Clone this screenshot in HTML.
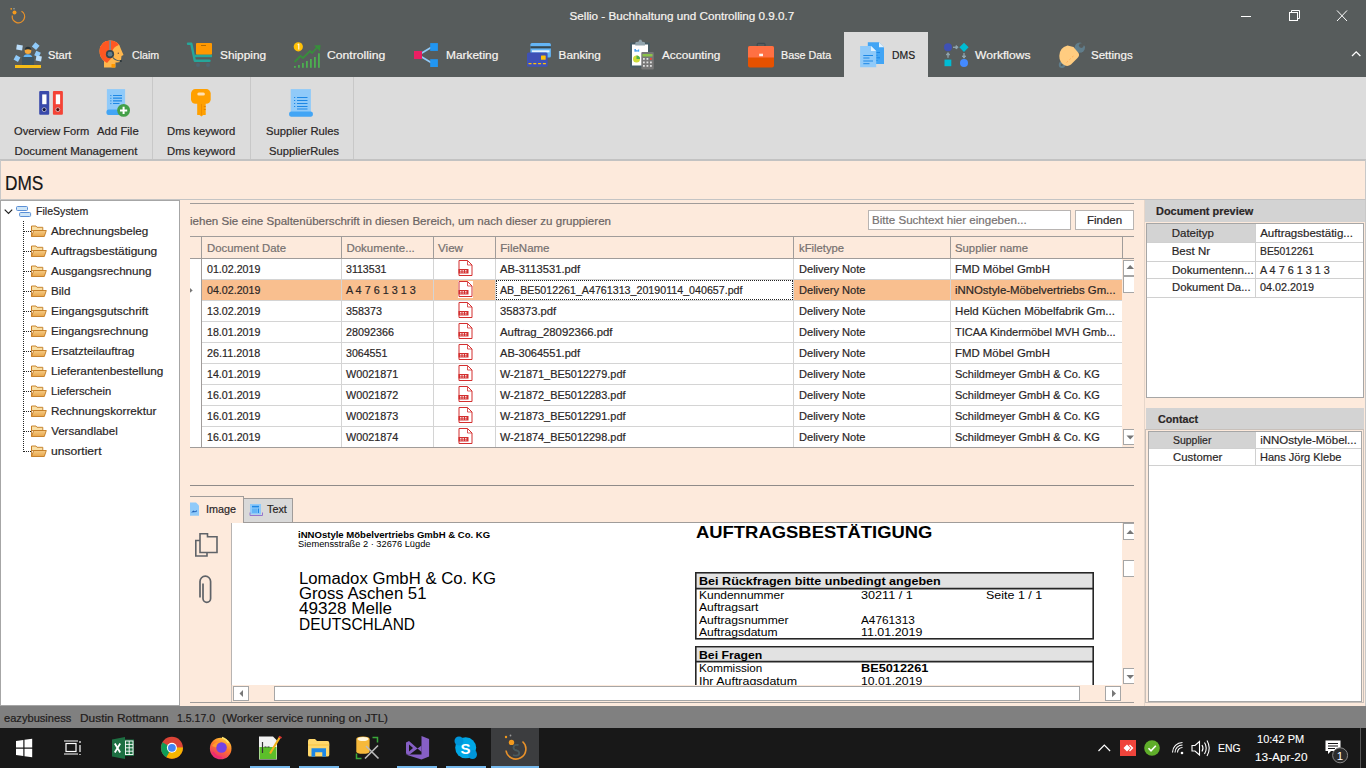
<!DOCTYPE html>
<html><head><meta charset="utf-8">
<style>
*{margin:0;padding:0;box-sizing:border-box}
html,body{width:1366px;height:768px;overflow:hidden;background:#fdeadc;font-family:"Liberation Sans",sans-serif;color:#1e1b1b}
.a{position:absolute}
.t{position:absolute;white-space:pre;transform-origin:0 0;-webkit-text-stroke:0.2px currentColor}
svg.ov{position:absolute;left:0;top:0}
</style></head><body>
<div class="a" style="left:0;top:0;width:1366px;height:77px;background:#575c5c"></div>
<div class="a" style="left:844px;top:32px;width:84px;height:45px;background:#dcdcdc"></div>
<div class="a" style="left:0;top:77px;width:1366px;height:83px;background:#dcdcdc"></div>
<div class="a" style="left:0;top:159px;width:1366px;height:2px;background:#c2c2c2"></div>
<div class="a" style="left:152px;top:77px;width:1px;height:82px;background:#c8c8c8"></div>
<div class="a" style="left:250px;top:77px;width:1px;height:82px;background:#c8c8c8"></div>
<div class="a" style="left:353px;top:77px;width:1px;height:82px;background:#c8c8c8"></div>
<!-- content frame right edge -->
<div class="a" style="left:1365px;top:160px;width:1px;height:546px;background:#c8c8c8"></div>
<!-- line at 200 -->
<div class="a" style="left:0;top:199px;width:1366px;height:1px;background:#c4c4c4"></div>
<!-- tree panel -->
<div class="a" style="left:0;top:200px;width:180px;height:506px;background:#fff;border:1px solid #a6a6a6;border-top-color:#a6a6a6"></div>
<!-- group panel -->
<div class="a" style="left:190px;top:203px;width:944px;height:1px;background:#a09c9a"></div>
<!-- search -->
<div class="a" style="left:868px;top:210px;width:203px;height:20px;background:#fff;border:1px solid #b8b4b2"></div>
<div class="a" style="left:1075px;top:210px;width:59px;height:20px;background:#fff;border:1px solid #b8b4b2"></div>
<!-- grid -->
<div class="a" style="left:190px;top:236px;width:944px;height:1px;background:#a09c9a"></div>
<div class="a" style="left:190px;top:258px;width:944px;height:1px;background:#a09c9a"></div>
<div class="a" style="left:190px;top:259px;width:932px;height:188px;background:#fff"></div>
<div class="a" style="left:202px;top:280px;width:920px;height:20px;background:#f9bf8f"></div>
<div class="a" style="left:496px;top:280px;width:297px;height:20px;background:#fff;border:1px dotted #222"></div>
<div class="a" style="left:458px;top:281px;width:15px;height:17px;background:#fff"></div>
<div class="a" style="left:190px;top:447px;width:944px;height:1px;background:#a09c9a"></div>
<div class="a" style="left:202px;top:279px;width:920px;height:1px;background:#d4d4d4"></div>
<div class="a" style="left:202px;top:300px;width:920px;height:1px;background:#d4d4d4"></div>
<div class="a" style="left:202px;top:321px;width:920px;height:1px;background:#d4d4d4"></div>
<div class="a" style="left:202px;top:342px;width:920px;height:1px;background:#d4d4d4"></div>
<div class="a" style="left:202px;top:363px;width:920px;height:1px;background:#d4d4d4"></div>
<div class="a" style="left:202px;top:384px;width:920px;height:1px;background:#d4d4d4"></div>
<div class="a" style="left:202px;top:405px;width:920px;height:1px;background:#d4d4d4"></div>
<div class="a" style="left:202px;top:426px;width:920px;height:1px;background:#d4d4d4"></div>
<div class="a" style="left:341px;top:237px;width:1px;height:21px;background:#a09c9a"></div>
<div class="a" style="left:341px;top:259px;width:1px;height:188px;background:#d4d4d4"></div>
<div class="a" style="left:433px;top:237px;width:1px;height:21px;background:#a09c9a"></div>
<div class="a" style="left:433px;top:259px;width:1px;height:188px;background:#d4d4d4"></div>
<div class="a" style="left:495px;top:237px;width:1px;height:21px;background:#a09c9a"></div>
<div class="a" style="left:495px;top:259px;width:1px;height:188px;background:#d4d4d4"></div>
<div class="a" style="left:793px;top:237px;width:1px;height:21px;background:#a09c9a"></div>
<div class="a" style="left:793px;top:259px;width:1px;height:188px;background:#d4d4d4"></div>
<div class="a" style="left:950px;top:237px;width:1px;height:21px;background:#a09c9a"></div>
<div class="a" style="left:950px;top:259px;width:1px;height:188px;background:#d4d4d4"></div>
<div class="a" style="left:201px;top:237px;width:1px;height:210px;background:#a09c9a"></div>
<div class="a" style="left:1122px;top:237px;width:1px;height:21px;background:#a09c9a"></div>
<!-- grid scrollbar -->
<div class="a" style="left:1123px;top:260px;width:11px;height:16px;background:#fff;border:1px solid #a6a6a6;border-right:none"></div>
<div class="a" style="left:1123px;top:276px;width:11px;height:17px;background:#fff;border:1px solid #a6a6a6;border-right:none"></div>
<div class="a" style="left:1123px;top:429px;width:11px;height:16px;background:#fff;border:1px solid #a6a6a6;border-right:none"></div>
<!-- splitter -->
<div class="a" style="left:190px;top:485px;width:944px;height:1px;background:#8f8b89"></div>
<!-- preview tabs -->
<div class="a" style="left:190px;top:496px;width:54px;height:27px;border-top:1px solid #a09c9a;border-right:1px solid #a09c9a;background:#fdeadc"></div>
<div class="a" style="left:244px;top:498px;width:49px;height:24px;background:#d9d9d9;border:1px solid #a09c9a;border-left:none;border-bottom:none"></div>
<div class="a" style="left:244px;top:522px;width:890px;height:1px;background:#a09c9a"></div>
<!-- preview area -->
<div class="a" style="left:231px;top:523px;width:891px;height:162px;background:#fff;border-left:1px solid #b8b4b2"></div>
<div class="a" style="left:231px;top:685px;width:1px;height:17px;background:#c4c0be"></div>
<!-- doc boxes -->
<svg class="a" style="left:0;top:0" width="1366" height="768">
<rect x="696" y="573.5" width="397" height="15" fill="#e2e2e2"/>
<rect x="696" y="647.5" width="397" height="14" fill="#e2e2e2"/>
<g fill="none" stroke="#262626" stroke-width="1.6">
<rect x="695.8" y="572.8" width="397.4" height="66"/>
<path d="M695.8,588.6 H1093.2"/>
<path d="M695.8,685 V646.8 H1093.2 V685 M695.8,661.6 H1093.2"/>
</g></svg>
<!-- preview scrollbars -->
<div class="a" style="left:1123px;top:523px;width:11px;height:17px;background:#fff;border:1px solid #a6a6a6;border-right:none"></div>
<div class="a" style="left:1123px;top:560px;width:11px;height:17px;background:#fff;border:1px solid #a6a6a6;border-right:none"></div>
<div class="a" style="left:1123px;top:668px;width:11px;height:16px;background:#fff;border:1px solid #a6a6a6;border-right:none"></div>
<div class="a" style="left:233px;top:686px;width:16px;height:15px;background:#fff;border:1px solid #a6a6a6"></div>
<div class="a" style="left:274px;top:686px;width:806px;height:15px;background:#fff;border:1px solid #a6a6a6"></div>
<div class="a" style="left:1105px;top:686px;width:16px;height:15px;background:#fff;border:1px solid #a6a6a6"></div>
<div class="a" style="left:190px;top:702px;width:944px;height:1px;background:#a09c9a"></div>
<!-- right panel -->
<div class="a" style="left:1144px;top:200px;width:1px;height:506px;background:#e6d6ca"></div>
<div class="a" style="left:1145px;top:200px;width:220px;height:22px;background:#d3d3d3"></div>
<div class="a" style="left:1146px;top:223px;width:218px;height:175px;background:#fff;border:1px solid #a6a6a6"></div>
<div class="a" style="left:1147px;top:224px;width:108px;height:19px;background:#d3d3d3"></div>
<div class="a" style="left:1147px;top:242px;width:216px;height:1px;background:#d0d0d0"></div>
<div class="a" style="left:1147px;top:261px;width:216px;height:1px;background:#d0d0d0"></div>
<div class="a" style="left:1147px;top:278px;width:216px;height:1px;background:#d0d0d0"></div>
<div class="a" style="left:1147px;top:297px;width:216px;height:1px;background:#d0d0d0"></div>
<div class="a" style="left:1255px;top:224px;width:1px;height:73px;background:#d0d0d0"></div>
<div class="a" style="left:1146px;top:408px;width:218px;height:21px;background:#d3d3d3"></div>
<div class="a" style="left:1145px;top:429px;width:219px;height:274px;border:1px solid #c8c0ba;background:#fdeadc"></div>
<div class="a" style="left:1148px;top:431px;width:214px;height:271px;background:#fff;border:1px solid #a6a6a6"></div>
<div class="a" style="left:1149px;top:432px;width:106px;height:17px;background:#d3d3d3"></div>
<div class="a" style="left:1149px;top:448px;width:212px;height:1px;background:#d0d0d0"></div>
<div class="a" style="left:1149px;top:465px;width:212px;height:1px;background:#d0d0d0"></div>
<div class="a" style="left:1255px;top:432px;width:1px;height:33px;background:#d0d0d0"></div>
<!-- status bar -->
<div class="a" style="left:0;top:706px;width:1366px;height:22px;background:#808080"></div>
<!-- taskbar -->
<div class="a" style="left:0;top:728px;width:1366px;height:40px;background:#181818"></div>
<div class="a" style="left:491px;top:728px;width:48px;height:40px;background:#3c3d3f"></div>
<div class="a" style="left:250px;top:766px;width:40px;height:2px;background:#76b9ed"></div>
<div class="a" style="left:299px;top:766px;width:40px;height:2px;background:#76b9ed"></div>
<div class="a" style="left:397px;top:766px;width:40px;height:2px;background:#76b9ed"></div>
<div class="a" style="left:446px;top:766px;width:40px;height:2px;background:#76b9ed"></div>
<div class="a" style="left:491px;top:766px;width:48px;height:2px;background:#76b9ed"></div>
<div class="a" style="left:1360px;top:728px;width:1px;height:40px;background:#555"></div>
<div class="a" style="left:0;top:160px;width:1px;height:40px;background:#c8c8c8"></div>

<svg class="ov" width="1366" height="768" viewBox="0 0 1366 768">
<!-- app logo -->
<g>
<path d="M21.5,11.2 A6.2,6.2 0 1 1 12.3,15.5" fill="none" stroke="#e8912a" stroke-width="1.3"/>
<circle cx="14.5" cy="12.5" r="2" fill="#f39a1e"/>
<circle cx="11.2" cy="8.8" r="0.9" fill="#f39a1e"/>
<circle cx="14" cy="8.8" r="0.8" fill="#9aa"/>
</g>
<!-- window controls -->
<g stroke="#fff" stroke-width="1" fill="none">
<path d="M1241,16.5 H1251"/>
<rect x="1289.5" y="12.5" width="8" height="8"/>
<path d="M1291.5,12.5 V10.5 H1299.5 V18.5 H1297.5"/>
<path d="M1337,10.5 L1347,21 M1347,10.5 L1337,21"/>
<path d="M1352,56 L1356.2,51.8 L1360.4,56" stroke-width="1.3"/>
</g>
<!-- Start icon -->
<g>
<rect x="15" y="65" width="26" height="3" fill="#f6bd16"/>
<rect x="22" y="57" width="12" height="8" fill="#3e5461"/>
<path d="M23.5,57 Q24,54.5 27.5,54.3 Q31.5,54.5 32.3,57 Z" fill="#64b5f6"/>
<circle cx="28" cy="50.8" r="3.3" fill="#f7a93b"/>
<path d="M24.7,50 Q25,46.8 28,46.8 Q31,46.8 31.3,50 Q28,48.5 24.7,50Z" fill="#263238"/>
<rect x="16.5" y="45" width="6" height="5" fill="#bbdefb" transform="rotate(8 19.5 47.5)"/>
<rect x="33" y="43.5" width="5.5" height="5.5" fill="#90caf9" transform="rotate(40 35.8 46.2)"/>
<rect x="14.5" y="56" width="5" height="5" fill="#90caf9" transform="rotate(30 17 58.5)"/>
<rect x="35" y="51.5" width="5" height="5" fill="#90caf9" transform="rotate(25 37.5 54)"/>
<rect x="36" y="56" width="5.5" height="5" fill="#bbdefb" transform="rotate(10 38.7 58.5)"/>
</g>
<!-- Claim -->
<g>
<path d="M104,67.5 V61 Q99.5,57 99.5,51 Q100,41 110,40.5 Q118.5,40.5 120.5,48 L123.5,55 L121.5,56 L121,60 Q120.5,62.5 117,62.5 L115.5,62.5 V67.5 Z" fill="#ffb74d"/>
<path d="M104,61 Q99.5,57 99.5,51 Q100,41 110,40.5 Q116.5,40.5 118.8,45 Q113,47 112,52 L111.5,58 L107,63 Z" fill="#ff5722"/>
<rect x="109.3" y="40.5" width="1.6" height="10" fill="#78909c"/>
<circle cx="110" cy="54.2" r="4.1" fill="#37474f"/>
<circle cx="110" cy="54.2" r="2.4" fill="#607d8b"/>
<path d="M113,57.5 Q115,60.5 120.5,61" stroke="#455a64" stroke-width="1.1" fill="none"/>
<circle cx="120.8" cy="61" r="1.1" fill="#263238"/>
<circle cx="118.3" cy="53.3" r="0.7" fill="#6d4c41"/>
<rect x="111.5" y="64" width="3.5" height="3.5" fill="#ff9800"/>
</g>
<!-- Shipping -->
<g>
<path d="M188,43.8 H191.3 L194.8,60.8 H209.5" stroke="#26a69a" stroke-width="2.4" fill="none" stroke-linecap="round" stroke-linejoin="round"/>
<rect x="196" y="43" width="16" height="11.7" rx="1" fill="#ff9800"/>
<rect x="201" y="45" width="5" height="1" fill="#b26a00"/>
<rect x="195" y="54.7" width="17" height="2.5" fill="#26a69a"/>
<circle cx="198" cy="65" r="2" fill="#4f6571"/>
<circle cx="208" cy="65" r="2" fill="#4f6571"/>
</g>
<!-- Controlling -->
<g>
<g fill="#4caf50">
<rect x="294" y="66" width="1.8" height="1.8"/>
<rect x="298" y="65" width="1.8" height="2.8"/>
<rect x="302" y="63" width="1.8" height="4.8"/>
<rect x="306" y="61" width="1.8" height="6.8"/>
<rect x="310" y="59" width="1.8" height="8.8"/>
<rect x="314" y="57" width="1.8" height="10.8"/>
<rect x="318" y="53.3" width="1.8" height="14.5"/>
</g>
<path d="M294.5,62 L300.5,56 L303,58 L310,51 L312,53 L318,46.5" stroke="#388e3c" stroke-width="1.8" fill="none"/>
<path d="M314,45.5 L320.5,45 L320,51.5 Z" fill="#388e3c"/>
<circle cx="298.3" cy="46.8" r="4.6" fill="#ffc107"/>
<path d="M297.6,44.6 L298.8,44 V49.6" stroke="#fff" stroke-width="1" fill="none"/>
</g>
<!-- Marketing -->
<g>
<path d="M421,53.5 L431,47.5 M421,56.5 L431,62.5" stroke="#90caf9" stroke-width="1.8"/>
<rect x="414" y="51" width="8" height="8" fill="#e91e63"/>
<rect x="430.2" y="43.1" width="7.7" height="7.8" fill="#2196f3"/>
<rect x="430.2" y="59.2" width="7.7" height="7.8" fill="#2196f3"/>
</g>
<!-- Banking -->
<g>
<rect x="530.4" y="43" width="20.5" height="14.5" rx="1.5" fill="#64b5f6"/>
<rect x="530.4" y="46.2" width="20.5" height="2.2" fill="#37474f"/>
<rect x="532" y="50.3" width="17.5" height="2" fill="#e3f2fd"/>
<rect x="527" y="52.5" width="20.6" height="14.2" rx="1.5" fill="#3f51b5"/>
<rect x="541" y="55.4" width="4.7" height="4.3" rx="0.5" fill="#ffc107"/>
<path d="M528.5,63.7 H546" stroke="#ffc107" stroke-width="1.3" stroke-dasharray="3,1.8"/>
</g>
<!-- Accounting -->
<g>
<rect x="630" y="42.4" width="19.8" height="25" rx="1" fill="#455a64"/>
<rect x="632" y="44.5" width="16" height="21" fill="#fff"/>
<path d="M635.3,45.5 V42.8 Q635.5,41.8 638.5,41.8 L639.3,39.8 L641.3,39.8 L642.2,41.8 Q645,41.8 645,42.8 V45.5Z" fill="#90a4ae"/>
<rect x="634.5" y="49" width="1.3" height="2.7" fill="#1e88e5"/>
<rect x="636.3" y="50" width="1.3" height="1.7" fill="#1e88e5"/>
<rect x="637.9" y="49.5" width="1.3" height="2.2" fill="#42a5f5"/>
<circle cx="636.5" cy="59" r="3.5" fill="#cddc39"/>
<path d="M636.5,59 V55.5 A3.5,3.5 0 0 1 640,59 Z" fill="#4caf50"/>
<rect x="641.3" y="52.1" width="12.5" height="17.3" rx="1" fill="#777"/>
<rect x="642.5" y="54" width="10" height="2.5" fill="#8bc34a"/>
<g fill="#e0e0e0">
<rect x="643" y="58" width="1.8" height="1.8"/><rect x="646.5" y="58" width="1.8" height="1.8"/>
<rect x="643" y="61.5" width="1.8" height="1.8"/><rect x="646.5" y="61.5" width="1.8" height="1.8"/><rect x="650" y="61.5" width="1.8" height="1.8"/>
<rect x="643" y="65" width="1.8" height="1.8"/><rect x="646.5" y="65" width="1.8" height="1.8"/><rect x="650" y="65" width="1.8" height="1.8"/>
</g>
<rect x="650" y="58" width="1.8" height="1.8" fill="#f44336"/>
</g>
<!-- Base Data -->
<g>
<path d="M757.2,46.2 V44 Q757.2,43.3 758,43.3 H764.2 Q765,43.3 765,44 V46.2" stroke="#37474f" stroke-width="1" fill="none"/>
<rect x="748" y="46.1" width="26" height="21.3" rx="2" fill="#e65100"/>
<path d="M748,57.5 V48.1 Q748,46.1 750,46.1 H772 Q774,46.1 774,48.1 V57.5Z" fill="#ff7043"/>
<rect x="759.2" y="53.7" width="3.8" height="2.5" fill="#fff5ee"/>
</g>
<!-- DMS -->
<g>
<path d="M867.8,42.3 H879 L884,47.3 V64 H867.8Z" fill="#42a5f5"/>
<path d="M879,42.3 L884,47.3 H879Z" fill="#e3f2fd"/>
<path d="M860.1,45.9 H871 L876.2,51 V67.2 H860.1Z" fill="#90caf9"/>
<path d="M871,45.9 L876.2,51 H871Z" fill="#e3f2fd"/>
<g stroke="#1e88e5" stroke-width="1">
<path d="M863.3,55.5 H873 M863.3,58 H869.5 M863.3,61 H873 M863.3,63.7 H869.5"/>
<path d="M876.5,52.5 H880 M876.5,55.3 H877.5 M876.5,57.8 H880 M876.5,60.5 H877.5"/>
</g>
</g>
<!-- Workflows -->
<g>
<circle cx="948" cy="47.3" r="4" fill="#3f51b5"/>
<path d="M964,42.7 L968.6,47.3 L964,51.9 L959.4,47.3Z" fill="#00bcd4"/>
<rect x="944.5" y="59.6" width="6.8" height="6.6" fill="#00bcd4"/>
<circle cx="964" cy="63" r="4" fill="#448aff"/>
<g fill="#90a4ae" stroke="#90a4ae">
<path d="M953,47.3 H957" stroke-width="1.3"/><path d="M956,45.6 L958.2,47.3 L956,49Z"/>
<path d="M948,57.8 V54" stroke-width="1.3"/><path d="M946.3,54.8 L948,52.6 L949.7,54.8Z"/>
<path d="M964,53 V56.8" stroke-width="1.3"/><path d="M962.3,56 L964,58.2 L965.7,56Z"/>
</g>
</g>
<!-- Settings -->
<g>
<circle cx="1062" cy="64.8" r="3.2" fill="#607d8b"/><circle cx="1061.8" cy="65" r="1" fill="#575c5c"/>
<path d="M1063,63 L1076,50" stroke="#607d8b" stroke-width="3.4"/>
<circle cx="1079.8" cy="47.6" r="5.2" fill="#607d8b"/>
<circle cx="1081.3" cy="45.6" r="2.4" fill="#575c5c"/>
<path d="M1081.3,43.2 L1086,40.5 L1087,46 L1083.7,45.6Z" fill="#575c5c"/>
<path d="M1059.3,56 Q1059.3,47.5 1067.5,45.4 L1073.5,47 L1078.5,53 Q1080,55.5 1077.5,58 L1071,64.5 Q1068,66.8 1065,65.5 Q1059.3,62.5 1059.3,56Z" fill="#ffcc80"/>
<path d="M1066.5,62.5 L1068,61.2 M1069.3,59.8 L1070.8,58.5 M1072,57.2 L1073.5,56" stroke="#ffab57" stroke-width="0.9"/>
</g>
<!-- Ribbon: binders -->
<g>
<rect x="39.2" y="91" width="10" height="23.7" rx="1" fill="#3949ab"/>
<rect x="42.2" y="94.4" width="4.3" height="9.8" fill="#fff"/>
<circle cx="44.2" cy="109.6" r="2" fill="#0d1040" stroke="#c9c9d6" stroke-width="0.8"/>
<rect x="52.9" y="91" width="10" height="23.7" rx="1" fill="#f44336"/>
<rect x="55.8" y="94.4" width="4.3" height="9.8" fill="#fff"/>
<circle cx="57.8" cy="109.6" r="2" fill="#5a0c0c" stroke="#d9c9c9" stroke-width="0.8"/>
</g>
<!-- Add file -->
<g>
<rect x="106.9" y="89.1" width="18.2" height="23" fill="#90caf9"/>
<path d="M106.4,112 Q106.4,109.5 108.5,109.5 H120 V115 H108.5 Q106.4,115 106.4,112Z" fill="#42a5f5"/>
<g stroke="#1e88e5" stroke-width="1.2"><path d="M113,95.5 H122 M113,98.2 H122 M113,100.8 H122 M113,103.5 H119.5"/></g>
<g fill="#1e88e5"><rect x="110.3" y="95" width="1.1" height="1.1"/><rect x="110.3" y="97.7" width="1.1" height="1.1"/><rect x="110.3" y="100.3" width="1.1" height="1.1"/><rect x="110.3" y="103" width="1.1" height="1.1"/></g>
<circle cx="123.6" cy="110.4" r="6.4" fill="#43a047"/>
<path d="M123.6,106.8 V114 M120,110.4 H127.2" stroke="#fff" stroke-width="2"/>
</g>
<!-- key -->
<g>
<rect x="191" y="89.1" width="19.7" height="14.7" rx="4.5" fill="#ffa000"/>
<rect x="197.2" y="103" width="8.5" height="12" fill="#ffa000"/>
<path d="M197.2,113 L201.4,116.4 L205.7,113Z" fill="#ffa000"/>
<rect x="197.3" y="92.5" width="7.6" height="3" rx="1.5" fill="#ffe0b2"/>
<path d="M205.7,106.5 H203.8 M205.7,109.5 H203.8" stroke="#e08000" stroke-width="1"/>
<rect x="201" y="104" width="1" height="11" fill="#ef8f00"/>
</g>
<!-- supplier rules -->
<g>
<rect x="290.7" y="89.1" width="20.2" height="24" fill="#90caf9"/>
<path d="M289,114 Q289,111.4 291,111.4 H311 Q313,111.4 313,114 Q313,116.7 311,116.7 H291 Q289,116.7 289,114Z" fill="#42a5f5"/>
<g stroke="#1e88e5" stroke-width="1"><path d="M297,97.5 H307.5 M297,100.5 H307.5 M297,103.5 H307.5 M297,106.5 H307.5 M297,109 H307.5"/></g>
<g fill="#1e88e5"><rect x="294" y="97" width="1.2" height="1"/><rect x="294" y="100" width="1.2" height="1"/><rect x="294" y="103" width="1.2" height="1"/><rect x="294" y="106" width="1.2" height="1"/></g>
</g>
<!-- tree -->
<path d="M4.7,209.6 L8.5,213.4 L12.2,209.6" stroke="#222" stroke-width="1.2" fill="none"/>
<rect x="16.5" y="206.5" width="11" height="4" rx="1" fill="#cfe6f8" stroke="#5b8fd6" stroke-width="1"/>
<rect x="19.6" y="212.5" width="11" height="4" rx="1" fill="#cfe6f8" stroke="#5b8fd6" stroke-width="1"/>
<path d="M23.5,221 V452" stroke="#222" stroke-width="1" stroke-dasharray="1,1"/>
<defs><linearGradient id="fg" x1="0" y1="0" x2="0" y2="1"><stop offset="0" stop-color="#fde7b0"/><stop offset="1" stop-color="#e9a54a"/></linearGradient></defs>
<path d="M24,231.5 H31" stroke="#222" stroke-width="1" stroke-dasharray="1,1"/>
<g transform="translate(31.5,225.5)"><path d="M0,0.5 H4.5 L5.5,1.8 H11.3 V5 H0Z" fill="#f9dfa5" stroke="#c27a23" stroke-width="0.9"/><path d="M0,11 V1 M2.2,5 H14.8 L12.8,11 H0Z" fill="url(#fg)" stroke="#c27a23" stroke-width="0.9"/></g>
<path d="M24,251.5 H31" stroke="#222" stroke-width="1" stroke-dasharray="1,1"/>
<g transform="translate(31.5,245.5)"><path d="M0,0.5 H4.5 L5.5,1.8 H11.3 V5 H0Z" fill="#f9dfa5" stroke="#c27a23" stroke-width="0.9"/><path d="M0,11 V1 M2.2,5 H14.8 L12.8,11 H0Z" fill="url(#fg)" stroke="#c27a23" stroke-width="0.9"/></g>
<path d="M24,271.5 H31" stroke="#222" stroke-width="1" stroke-dasharray="1,1"/>
<g transform="translate(31.5,265.5)"><path d="M0,0.5 H4.5 L5.5,1.8 H11.3 V5 H0Z" fill="#f9dfa5" stroke="#c27a23" stroke-width="0.9"/><path d="M0,11 V1 M2.2,5 H14.8 L12.8,11 H0Z" fill="url(#fg)" stroke="#c27a23" stroke-width="0.9"/></g>
<path d="M24,291.5 H31" stroke="#222" stroke-width="1" stroke-dasharray="1,1"/>
<g transform="translate(31.5,285.5)"><path d="M0,0.5 H4.5 L5.5,1.8 H11.3 V5 H0Z" fill="#f9dfa5" stroke="#c27a23" stroke-width="0.9"/><path d="M0,11 V1 M2.2,5 H14.8 L12.8,11 H0Z" fill="url(#fg)" stroke="#c27a23" stroke-width="0.9"/></g>
<path d="M24,311.5 H31" stroke="#222" stroke-width="1" stroke-dasharray="1,1"/>
<g transform="translate(31.5,305.5)"><path d="M0,0.5 H4.5 L5.5,1.8 H11.3 V5 H0Z" fill="#f9dfa5" stroke="#c27a23" stroke-width="0.9"/><path d="M0,11 V1 M2.2,5 H14.8 L12.8,11 H0Z" fill="url(#fg)" stroke="#c27a23" stroke-width="0.9"/></g>
<path d="M24,331.5 H31" stroke="#222" stroke-width="1" stroke-dasharray="1,1"/>
<g transform="translate(31.5,325.5)"><path d="M0,0.5 H4.5 L5.5,1.8 H11.3 V5 H0Z" fill="#f9dfa5" stroke="#c27a23" stroke-width="0.9"/><path d="M0,11 V1 M2.2,5 H14.8 L12.8,11 H0Z" fill="url(#fg)" stroke="#c27a23" stroke-width="0.9"/></g>
<path d="M24,351.5 H31" stroke="#222" stroke-width="1" stroke-dasharray="1,1"/>
<g transform="translate(31.5,345.5)"><path d="M0,0.5 H4.5 L5.5,1.8 H11.3 V5 H0Z" fill="#f9dfa5" stroke="#c27a23" stroke-width="0.9"/><path d="M0,11 V1 M2.2,5 H14.8 L12.8,11 H0Z" fill="url(#fg)" stroke="#c27a23" stroke-width="0.9"/></g>
<path d="M24,371.5 H31" stroke="#222" stroke-width="1" stroke-dasharray="1,1"/>
<g transform="translate(31.5,365.5)"><path d="M0,0.5 H4.5 L5.5,1.8 H11.3 V5 H0Z" fill="#f9dfa5" stroke="#c27a23" stroke-width="0.9"/><path d="M0,11 V1 M2.2,5 H14.8 L12.8,11 H0Z" fill="url(#fg)" stroke="#c27a23" stroke-width="0.9"/></g>
<path d="M24,391.5 H31" stroke="#222" stroke-width="1" stroke-dasharray="1,1"/>
<g transform="translate(31.5,385.5)"><path d="M0,0.5 H4.5 L5.5,1.8 H11.3 V5 H0Z" fill="#f9dfa5" stroke="#c27a23" stroke-width="0.9"/><path d="M0,11 V1 M2.2,5 H14.8 L12.8,11 H0Z" fill="url(#fg)" stroke="#c27a23" stroke-width="0.9"/></g>
<path d="M24,411.5 H31" stroke="#222" stroke-width="1" stroke-dasharray="1,1"/>
<g transform="translate(31.5,405.5)"><path d="M0,0.5 H4.5 L5.5,1.8 H11.3 V5 H0Z" fill="#f9dfa5" stroke="#c27a23" stroke-width="0.9"/><path d="M0,11 V1 M2.2,5 H14.8 L12.8,11 H0Z" fill="url(#fg)" stroke="#c27a23" stroke-width="0.9"/></g>
<path d="M24,431.5 H31" stroke="#222" stroke-width="1" stroke-dasharray="1,1"/>
<g transform="translate(31.5,425.5)"><path d="M0,0.5 H4.5 L5.5,1.8 H11.3 V5 H0Z" fill="#f9dfa5" stroke="#c27a23" stroke-width="0.9"/><path d="M0,11 V1 M2.2,5 H14.8 L12.8,11 H0Z" fill="url(#fg)" stroke="#c27a23" stroke-width="0.9"/></g>
<path d="M24,451.5 H31" stroke="#222" stroke-width="1" stroke-dasharray="1,1"/>
<g transform="translate(31.5,445.5)"><path d="M0,0.5 H4.5 L5.5,1.8 H11.3 V5 H0Z" fill="#f9dfa5" stroke="#c27a23" stroke-width="0.9"/><path d="M0,11 V1 M2.2,5 H14.8 L12.8,11 H0Z" fill="url(#fg)" stroke="#c27a23" stroke-width="0.9"/></g>

<!-- grid pdf icons -->
<defs><g id="pdf"><path d="M0.5,0.5 H9 L13.5,5 V15.5 H0.5Z" fill="#fff" stroke="#d32f2f" stroke-width="1"/><path d="M9,0.5 V5 H13.5" fill="none" stroke="#d32f2f" stroke-width="0.8"/><rect x="0" y="9" width="10" height="4.5" fill="#d32f2f"/><path d="M1.5,10.5 H3 M4,10.5 H5.5 M6.5,10.5 H8 M1.5,12 H3 M4,12 H5.5 M6.5,12 H8" stroke="#fff" stroke-width="0.8"/></g></defs>
<use href="#pdf" x="458.5" y="260"/>
<use href="#pdf" x="458.5" y="281"/>
<use href="#pdf" x="458.5" y="302"/>
<use href="#pdf" x="458.5" y="323"/>
<use href="#pdf" x="458.5" y="344"/>
<use href="#pdf" x="458.5" y="365"/>
<use href="#pdf" x="458.5" y="386"/>
<use href="#pdf" x="458.5" y="407"/>
<use href="#pdf" x="458.5" y="428"/>
<path d="M190,288 L192.7,290.4 L190,292.8Z" fill="#777"/>
<path d="M1126.5,269 L1130.2,265 L1134,269Z" fill="#777"/>
<path d="M1126.5,435.5 L1130.2,439.5 L1134,435.5Z" fill="#777"/>
<path d="M1126.5,534 L1130.2,530 L1134,534Z" fill="#777"/>
<path d="M1126.5,675 L1130.2,679 L1134,675Z" fill="#777"/>
<path d="M243,690 L239.5,693.5 L243,697Z" fill="#777"/>
<path d="M1112,689.8 L1116,693.5 L1112,697.2Z" fill="#777"/>
<path d="M190,502.5 H196 L199,505.5 V515.8 H190Z" fill="#90caf9"/><path d="M191,512.5 L193.5,510.5 L195,511.5 L197,510 L196.5,512 Z" fill="#1e60b8"/>
<rect x="250" y="504" width="11" height="10.5" fill="#90caf9"/><rect x="252" y="505.8" width="7" height="1.6" fill="#1e88e5"/><rect x="252" y="508.5" width="5" height="4.5" fill="#64b5f6"/><rect x="257.8" y="508.5" width="1.2" height="4.5" fill="#1e88e5"/><path d="M250,512.5 V515.5 H262.5 V512.5" stroke="#9575cd" stroke-width="1" fill="none"/>
<g stroke="#5f6368" stroke-width="1.6" fill="none"><path d="M200,540.5 H195.8 V556 H207 V552.5"/><path d="M200,533.8 H207.5 V536.8 H217 V552.5 H200Z"/></g>
<path d="M202.5,582 V597 A3.8,3.8 0 0 0 210.1,597 V580 A5.3,5.3 0 0 0 199.5,580 V596" stroke="#5f6368" stroke-width="1.7" fill="none" transform="translate(0.5,1.5)"/>
<!-- taskbar -->
<g fill="#fff"><path d="M16,741 L23.3,740 V747.5 H16Z M24.5,739.8 L32.2,738.8 V747.5 H24.5Z M16,748.7 H23.3 V756 L16,755Z M24.5,748.7 H32.2 V757.2 L24.5,756.2Z"/></g>
<g stroke="#fff" stroke-width="1.2" fill="none"><rect x="66" y="743.5" width="10" height="8"/><path d="M64,741 H78 M64,754 H78 M80,741 V743 M80,745 V752 M80,754 V755"/></g>
<g><rect x="123" y="739.5" width="11" height="16.5" fill="#1d6f42"/>
<g stroke="#fff" stroke-width="0.9" fill="none"><rect x="125.5" y="741" width="7.5" height="13.5"/><path d="M125.5,744.4 H133 M125.5,747.8 H133 M125.5,751.2 H133 M129.2,741 V754.5"/></g>
<path d="M112,739.5 L125,737 V759 L112,756.5Z" fill="#1d6f42"/>
<path d="M114.8,743.5 L120.2,752.5 M120.2,743.5 L114.8,752.5" stroke="#fff" stroke-width="1.8"/></g>
<g><circle cx="171.9" cy="747.8" r="11" fill="#db4437"/>
<path d="M171.9,747.8 L162.4,742.3 A11,11 0 0 0 166.4,757.3Z" fill="#0f9d58"/>
<path d="M171.9,747.8 L166.4,757.3 A11,11 0 0 0 182.9,747.8Z" fill="#f4b400"/>
<path d="M171.9,747.8 L177.4,757.3 L183,747.5Z" fill="#f4b400"/>
<circle cx="171.9" cy="747.8" r="5" fill="#fff"/><circle cx="171.9" cy="747.8" r="3.9" fill="#4285f4"/></g>
<defs><linearGradient id="ffg" x1="0.8" y1="0" x2="0.3" y2="1"><stop offset="0" stop-color="#ffd23a"/><stop offset="0.45" stop-color="#ff7a2a"/><stop offset="1" stop-color="#e8247a"/></linearGradient></defs>
<g><circle cx="220.7" cy="748.5" r="10.8" fill="url(#ffg)"/>
<path d="M222,737.5 Q226.5,739 228.5,743" stroke="#ffe36e" stroke-width="1.5" fill="none"/>
<circle cx="221.5" cy="747.5" r="5.3" fill="#7542e5"/><path d="M216.2,747.5 Q216.5,743 220.5,742 Q215,741.5 212,746Z" fill="#ff9a30"/>
<path d="M213,752 Q216,757.5 222,757.5" stroke="#f2207a" stroke-width="1.2" fill="none"/></g>
<g><path d="M259,736.5 H273 L277,740.5 V759.5 H259Z" fill="#f2f2f2"/><rect x="259.5" y="747" width="17" height="12" fill="#5cbf2a"/>
<path d="M262.5,742 V753 M264.5,747 H266.5 M267.5,747 H269.5" stroke="#333" stroke-width="1.2"/>
<path d="M270,753.5 L280,737" stroke="#f4b21b" stroke-width="2.2"/><path d="M279,736.5 L281.5,738" stroke="#d33" stroke-width="2"/></g>
<g><path d="M308,741 Q308,739 309.5,739 H315 L317,741 H327.5 Q329.3,741 329.3,743 V755 Q329.3,756.5 327.5,756.5 H309.5 Q308,756.5 308,755Z" fill="#ffd86b"/>
<path d="M308,745 H329.3" stroke="#f6c343" stroke-width="1"/>
<path d="M311.5,748.2 H326 V756.8 H322.3 V752.3 H315.2 V756.8 H311.5Z" fill="#1e88e5"/></g>
<g><path d="M356.3,739 Q356.3,736.5 363,736.5 Q369.6,736.5 369.6,739 V751.5 Q369.6,753.8 363,753.8 Q356.3,753.8 356.3,751.5Z" fill="#f6b93b"/><ellipse cx="363" cy="739" rx="5.5" ry="2" fill="#fff6dd"/>
<path d="M372.5,737.5 H377.5 V742.5 M356.5,753.5 V758.5 H361.5" stroke="#3aa83a" stroke-width="1.5" fill="none"/>
<path d="M365,758.5 L378,745.5 M366,746 L378.5,758.5" stroke="#bbb" stroke-width="1.6"/></g>
<g><path d="M421.5,735.9 L429.1,739 V756.5 L421.5,759.6 L405.5,754.5 L421.5,754.5Z" fill="#865fc5"/>
<path d="M406,742.5 L409,741 L421.5,752 V745.5 L409,755 L406,753.5Z" fill="#865fc5"/><path d="M409,744.5 L413,748 L409,751.5Z" fill="#181818"/></g>
<g><circle cx="465.7" cy="747.8" r="10.5" fill="#00a8e6"/><circle cx="459" cy="741" r="4.5" fill="#0095d9"/><circle cx="472.5" cy="754.5" r="4.5" fill="#0095d9"/>
<text x="460.5" y="753.5" font-family="Liberation Sans" font-weight="700" font-size="15" fill="#fff">S</text></g>
<g><path d="M522.5,741.5 A10,10 0 1 1 506,750.5" fill="none" stroke="#e8912a" stroke-width="1.6"/>
<circle cx="511.5" cy="742.4" r="2.7" fill="#f39a1e"/><circle cx="506" cy="737" r="1.2" fill="#f39a1e"/><circle cx="510.5" cy="735.5" r="0.9" fill="#999"/>
<path d="M518.5,745 Q514,744 513.5,747.5 Q513.5,750 517,750.5 Q520,751.5 519,754.5 Q517,756.5 513,755" fill="none" stroke="#4a5a5e" stroke-width="1.8"/></g>
<!-- tray -->
<path d="M1098.5,751 L1104.3,745.2 L1110.1,751" stroke="#fff" stroke-width="1.2" fill="none"/>
<rect x="1120" y="740" width="16" height="16" fill="#ef443b"/><path d="M1123.5,748 L1127,744.5 L1130.5,748 L1127,751.5Z M1129,745.5 L1131.5,748 L1129,750.5 L1132,748.2Z" fill="#fff"/>
<path d="M1129.5,745 L1132.5,748 L1129.5,751" fill="none" stroke="#fff" stroke-width="1.3"/>
<circle cx="1152" cy="748" r="7.8" fill="#5fad2a"/><path d="M1148.5,748.3 L1151,750.8 L1155.8,745.8" stroke="#fff" stroke-width="1.6" fill="none"/>
<g stroke="#fff" stroke-width="1.1" fill="none"><path d="M1172.5,752.5 A10,10 0 0 1 1182.5,742.5 M1175,752.5 A7.5,7.5 0 0 1 1182.5,745 M1177.5,752.5 A5,5 0 0 1 1182.5,747.5"/></g><circle cx="1182" cy="753" r="1.3" fill="#fff"/>
<g stroke="#fff" stroke-width="1.1" fill="none"><path d="M1192,745.5 H1195 L1199.5,741.5 V755 L1195,751 H1192Z"/><path d="M1202,745 Q1204,748.2 1202,751.5 M1204.5,742.5 Q1208,748.2 1204.5,754 M1207,740.5 Q1211.5,748.2 1207,756"/></g>
<g><path d="M1325.5,740.5 H1340.5 V751 H1331 L1328,754 V751 H1325.5Z" fill="#fff"/><path d="M1328,743.5 H1338 M1328,746 H1338 M1328,748.5 H1335" stroke="#141517" stroke-width="1"/>
<circle cx="1340.1" cy="755.3" r="7.5" fill="#2b2b2b" stroke="#888" stroke-width="1"/>
<text x="1336.8" y="759.6" font-family="Liberation Sans" font-size="11.5" fill="#fff">1</text></g>

</svg>
<div class="t" style="left:569.5px;top:10.1px;font-size:11.7px;line-height:11.7px;color:#f7f4f0;">Sellio - Buchhaltung und Controlling 0.9.0.7</div>
<div class="t" style="left:47.5px;top:49.3px;font-size:11.7px;line-height:11.7px;color:#f7f4f0;transform:scaleX(0.9478);">Start</div>
<div class="t" style="left:131.6px;top:49.3px;font-size:11.7px;line-height:11.7px;color:#f7f4f0;transform:scaleX(0.9105);">Claim</div>
<div class="t" style="left:219.5px;top:49.3px;font-size:11.7px;line-height:11.7px;color:#f7f4f0;transform:scaleX(1.0132);">Shipping</div>
<div class="t" style="left:326.5px;top:49.3px;font-size:11.7px;line-height:11.7px;color:#f7f4f0;transform:scaleX(1.0434);">Controlling</div>
<div class="t" style="left:445.5px;top:49.3px;font-size:11.7px;line-height:11.7px;color:#f7f4f0;transform:scaleX(1.0189);">Marketing</div>
<div class="t" style="left:558.6px;top:49.3px;font-size:11.7px;line-height:11.7px;color:#f7f4f0;">Banking</div>
<div class="t" style="left:661.5px;top:49.3px;font-size:11.7px;line-height:11.7px;color:#f7f4f0;transform:scaleX(1.0082);">Accounting</div>
<div class="t" style="left:780.5px;top:49.3px;font-size:11.7px;line-height:11.7px;color:#f7f4f0;transform:scaleX(0.9216);">Base Data</div>
<div class="t" style="left:975.3px;top:49.3px;font-size:11.7px;line-height:11.7px;color:#f7f4f0;transform:scaleX(1.0338);">Workflows</div>
<div class="t" style="left:1091.1px;top:49.3px;font-size:11.7px;line-height:11.7px;color:#f7f4f0;transform:scaleX(0.9873);">Settings</div>
<div class="t" style="left:891.6px;top:49.3px;font-size:11.7px;line-height:11.7px;color:#1e1b1b;transform:scaleX(0.8890);">DMS</div>
<div class="t" style="left:13.7px;top:125.9px;font-size:11.5px;line-height:11.5px;color:#2a2626;transform:scaleX(0.9647);">Overview Form</div>
<div class="t" style="left:97.0px;top:125.9px;font-size:11.5px;line-height:11.5px;color:#2a2626;transform:scaleX(0.9884);">Add File</div>
<div class="t" style="left:14.6px;top:145.9px;font-size:11.5px;line-height:11.5px;color:#2a2626;">Document Management</div>
<div class="t" style="left:167.4px;top:125.9px;font-size:11.5px;line-height:11.5px;color:#2a2626;transform:scaleX(0.9791);">Dms keyword</div>
<div class="t" style="left:167.4px;top:145.9px;font-size:11.5px;line-height:11.5px;color:#2a2626;transform:scaleX(0.9791);">Dms keyword</div>
<div class="t" style="left:266.3px;top:125.9px;font-size:11.5px;line-height:11.5px;color:#2a2626;transform:scaleX(0.9787);">Supplier Rules</div>
<div class="t" style="left:268.5px;top:145.9px;font-size:11.5px;line-height:11.5px;color:#2a2626;transform:scaleX(0.9747);">SupplierRules</div>
<div class="t" style="left:5.2px;top:172.6px;font-size:20.5px;line-height:20.5px;color:#151515;transform:scaleX(0.8428);">DMS</div>
<div class="t" style="left:36.2px;top:205.9px;font-size:11.5px;line-height:11.5px;color:#2a2626;transform:scaleX(0.9196);">FileSystem</div>
<div class="t" style="left:51.2px;top:225.9px;font-size:11.5px;line-height:11.5px;color:#2a2626;transform:scaleX(1.0144);">Abrechnungsbeleg</div>
<div class="t" style="left:51.2px;top:245.9px;font-size:11.5px;line-height:11.5px;color:#2a2626;transform:scaleX(1.0382);">Auftragsbestätigung</div>
<div class="t" style="left:51.2px;top:265.9px;font-size:11.5px;line-height:11.5px;color:#2a2626;transform:scaleX(1.0150);">Ausgangsrechnung</div>
<div class="t" style="left:51.2px;top:285.9px;font-size:11.5px;line-height:11.5px;color:#2a2626;transform:scaleX(1.0111);">Bild</div>
<div class="t" style="left:51.2px;top:305.9px;font-size:11.5px;line-height:11.5px;color:#2a2626;transform:scaleX(1.0283);">Eingangsgutschrift</div>
<div class="t" style="left:51.2px;top:325.9px;font-size:11.5px;line-height:11.5px;color:#2a2626;transform:scaleX(1.0144);">Eingangsrechnung</div>
<div class="t" style="left:51.2px;top:345.9px;font-size:11.5px;line-height:11.5px;color:#2a2626;">Ersatzteilauftrag</div>
<div class="t" style="left:51.2px;top:365.9px;font-size:11.5px;line-height:11.5px;color:#2a2626;transform:scaleX(1.0211);">Lieferantenbestellung</div>
<div class="t" style="left:51.2px;top:385.9px;font-size:11.5px;line-height:11.5px;color:#2a2626;transform:scaleX(0.9707);">Lieferschein</div>
<div class="t" style="left:51.2px;top:405.9px;font-size:11.5px;line-height:11.5px;color:#2a2626;transform:scaleX(1.0177);">Rechnungskorrektur</div>
<div class="t" style="left:51.2px;top:425.9px;font-size:11.5px;line-height:11.5px;color:#2a2626;">Versandlabel</div>
<div class="t" style="left:51.2px;top:445.9px;font-size:11.5px;line-height:11.5px;color:#2a2626;transform:scaleX(1.0535);">unsortiert</div>
<div class="t" style="left:190.3px;top:215.5px;font-size:11.5px;line-height:11.5px;color:#6b6463;transform:scaleX(1.0054);">iehen Sie eine Spaltenüberschrift in diesen Bereich, um nach dieser zu gruppieren</div>
<div class="t" style="left:872.0px;top:215.1px;font-size:11.5px;line-height:11.5px;color:#777272;transform:scaleX(1.0076);">Bitte Suchtext hier eingeben...</div>
<div class="t" style="left:1087.0px;top:215.1px;font-size:11.5px;line-height:11.5px;color:#2a2626;">Finden</div>
<div class="t" style="left:206.5px;top:242.5px;font-size:11.5px;line-height:11.5px;color:#75706f;transform:scaleX(0.9887);">Document Date</div>
<div class="t" style="left:346.4px;top:242.5px;font-size:11.5px;line-height:11.5px;color:#75706f;">Dokumente...</div>
<div class="t" style="left:438.0px;top:242.5px;font-size:11.5px;line-height:11.5px;color:#75706f;transform:scaleX(1.0114);">View</div>
<div class="t" style="left:500.3px;top:242.5px;font-size:11.5px;line-height:11.5px;color:#75706f;">FileName</div>
<div class="t" style="left:798.8px;top:242.5px;font-size:11.5px;line-height:11.5px;color:#75706f;transform:scaleX(0.9798);">kFiletype</div>
<div class="t" style="left:955.1px;top:242.5px;font-size:11.5px;line-height:11.5px;color:#75706f;transform:scaleX(0.9858);">Supplier name</div>
<div class="t" style="left:206.5px;top:263.9px;font-size:11.5px;line-height:11.5px;color:#2a2626;transform:scaleX(0.9277);">01.02.2019</div>
<div class="t" style="left:346.4px;top:263.9px;font-size:11.5px;line-height:11.5px;color:#2a2626;transform:scaleX(0.9198);">3113531</div>
<div class="t" style="left:500.2px;top:263.9px;font-size:11.5px;line-height:11.5px;color:#2a2626;transform:scaleX(0.9735);">AB-3113531.pdf</div>
<div class="t" style="left:798.8px;top:263.9px;font-size:11.5px;line-height:11.5px;color:#2a2626;transform:scaleX(0.9633);">Delivery Note</div>
<div class="t" style="left:955.1px;top:263.9px;font-size:11.5px;line-height:11.5px;color:#2a2626;transform:scaleX(0.9900);">FMD Möbel GmbH</div>
<div class="t" style="left:206.5px;top:284.9px;font-size:11.5px;line-height:11.5px;color:#2a2626;transform:scaleX(0.9277);">04.02.2019</div>
<div class="t" style="left:346.4px;top:284.9px;font-size:11.5px;line-height:11.5px;color:#2a2626;transform:scaleX(0.9397);">A 4 7 6 1 3 1 3</div>
<div class="t" style="left:500.2px;top:284.9px;font-size:11.5px;line-height:11.5px;color:#2a2626;transform:scaleX(0.9278);">AB_BE5012261_A4761313_20190114_040657.pdf</div>
<div class="t" style="left:798.8px;top:284.9px;font-size:11.5px;line-height:11.5px;color:#2a2626;transform:scaleX(0.9633);">Delivery Note</div>
<div class="t" style="left:955.1px;top:284.9px;font-size:11.5px;line-height:11.5px;color:#2a2626;transform:scaleX(0.9894);">iNNOstyle-Möbelvertriebs Gm...</div>
<div class="t" style="left:206.5px;top:305.9px;font-size:11.5px;line-height:11.5px;color:#2a2626;transform:scaleX(0.9277);">13.02.2019</div>
<div class="t" style="left:346.4px;top:305.9px;font-size:11.5px;line-height:11.5px;color:#2a2626;transform:scaleX(0.9355);">358373</div>
<div class="t" style="left:500.2px;top:305.9px;font-size:11.5px;line-height:11.5px;color:#2a2626;transform:scaleX(0.9763);">358373.pdf</div>
<div class="t" style="left:798.8px;top:305.9px;font-size:11.5px;line-height:11.5px;color:#2a2626;transform:scaleX(0.9633);">Delivery Note</div>
<div class="t" style="left:955.1px;top:305.9px;font-size:11.5px;line-height:11.5px;color:#2a2626;">Held Küchen Möbelfabrik Gm...</div>
<div class="t" style="left:206.5px;top:326.9px;font-size:11.5px;line-height:11.5px;color:#2a2626;transform:scaleX(0.9277);">18.01.2019</div>
<div class="t" style="left:346.4px;top:326.9px;font-size:11.5px;line-height:11.5px;color:#2a2626;transform:scaleX(0.9361);">28092366</div>
<div class="t" style="left:500.2px;top:326.9px;font-size:11.5px;line-height:11.5px;color:#2a2626;transform:scaleX(0.9883);">Auftrag_28092366.pdf</div>
<div class="t" style="left:798.8px;top:326.9px;font-size:11.5px;line-height:11.5px;color:#2a2626;transform:scaleX(0.9633);">Delivery Note</div>
<div class="t" style="left:955.1px;top:326.9px;font-size:11.5px;line-height:11.5px;color:#2a2626;transform:scaleX(0.9591);">TICAA Kindermöbel MVH Gmb...</div>
<div class="t" style="left:206.5px;top:347.9px;font-size:11.5px;line-height:11.5px;color:#2a2626;transform:scaleX(0.9417);">26.11.2018</div>
<div class="t" style="left:346.4px;top:347.9px;font-size:11.5px;line-height:11.5px;color:#2a2626;transform:scaleX(0.9223);">3064551</div>
<div class="t" style="left:500.2px;top:347.9px;font-size:11.5px;line-height:11.5px;color:#2a2626;transform:scaleX(0.9636);">AB-3064551.pdf</div>
<div class="t" style="left:798.8px;top:347.9px;font-size:11.5px;line-height:11.5px;color:#2a2626;transform:scaleX(0.9633);">Delivery Note</div>
<div class="t" style="left:955.1px;top:347.9px;font-size:11.5px;line-height:11.5px;color:#2a2626;transform:scaleX(0.9900);">FMD Möbel GmbH</div>
<div class="t" style="left:206.5px;top:368.9px;font-size:11.5px;line-height:11.5px;color:#2a2626;transform:scaleX(0.9277);">14.01.2019</div>
<div class="t" style="left:346.4px;top:368.9px;font-size:11.5px;line-height:11.5px;color:#2a2626;transform:scaleX(0.9402);">W0021871</div>
<div class="t" style="left:500.2px;top:368.9px;font-size:11.5px;line-height:11.5px;color:#2a2626;transform:scaleX(0.9496);">W-21871_BE5012279.pdf</div>
<div class="t" style="left:798.8px;top:368.9px;font-size:11.5px;line-height:11.5px;color:#2a2626;transform:scaleX(0.9633);">Delivery Note</div>
<div class="t" style="left:955.1px;top:368.9px;font-size:11.5px;line-height:11.5px;color:#2a2626;transform:scaleX(0.9560);">Schildmeyer GmbH &amp; Co. KG</div>
<div class="t" style="left:206.5px;top:389.9px;font-size:11.5px;line-height:11.5px;color:#2a2626;transform:scaleX(0.9277);">16.01.2019</div>
<div class="t" style="left:346.4px;top:389.9px;font-size:11.5px;line-height:11.5px;color:#2a2626;transform:scaleX(0.9402);">W0021872</div>
<div class="t" style="left:500.2px;top:389.9px;font-size:11.5px;line-height:11.5px;color:#2a2626;transform:scaleX(0.9496);">W-21872_BE5012283.pdf</div>
<div class="t" style="left:798.8px;top:389.9px;font-size:11.5px;line-height:11.5px;color:#2a2626;transform:scaleX(0.9633);">Delivery Note</div>
<div class="t" style="left:955.1px;top:389.9px;font-size:11.5px;line-height:11.5px;color:#2a2626;transform:scaleX(0.9560);">Schildmeyer GmbH &amp; Co. KG</div>
<div class="t" style="left:206.5px;top:410.9px;font-size:11.5px;line-height:11.5px;color:#2a2626;transform:scaleX(0.9277);">16.01.2019</div>
<div class="t" style="left:346.4px;top:410.9px;font-size:11.5px;line-height:11.5px;color:#2a2626;transform:scaleX(0.9402);">W0021873</div>
<div class="t" style="left:500.2px;top:410.9px;font-size:11.5px;line-height:11.5px;color:#2a2626;transform:scaleX(0.9496);">W-21873_BE5012291.pdf</div>
<div class="t" style="left:798.8px;top:410.9px;font-size:11.5px;line-height:11.5px;color:#2a2626;transform:scaleX(0.9633);">Delivery Note</div>
<div class="t" style="left:955.1px;top:410.9px;font-size:11.5px;line-height:11.5px;color:#2a2626;transform:scaleX(0.9560);">Schildmeyer GmbH &amp; Co. KG</div>
<div class="t" style="left:206.5px;top:431.9px;font-size:11.5px;line-height:11.5px;color:#2a2626;transform:scaleX(0.9277);">16.01.2019</div>
<div class="t" style="left:346.4px;top:431.9px;font-size:11.5px;line-height:11.5px;color:#2a2626;transform:scaleX(0.9402);">W0021874</div>
<div class="t" style="left:500.2px;top:431.9px;font-size:11.5px;line-height:11.5px;color:#2a2626;transform:scaleX(0.9496);">W-21874_BE5012298.pdf</div>
<div class="t" style="left:798.8px;top:431.9px;font-size:11.5px;line-height:11.5px;color:#2a2626;transform:scaleX(0.9633);">Delivery Note</div>
<div class="t" style="left:955.1px;top:431.9px;font-size:11.5px;line-height:11.5px;color:#2a2626;transform:scaleX(0.9560);">Schildmeyer GmbH &amp; Co. KG</div>
<div class="t" style="left:1156.4px;top:205.7px;font-size:11.5px;line-height:11.5px;color:#2a2626;font-weight:700;transform:scaleX(0.9516);">Document preview</div>
<div class="t" style="left:1171.7px;top:227.6px;font-size:11.5px;line-height:11.5px;color:#2a2626;">Dateityp</div>
<div class="t" style="left:1260.2px;top:227.6px;font-size:11.5px;line-height:11.5px;color:#2a2626;">Auftragsbestätig...</div>
<div class="t" style="left:1171.7px;top:246.3px;font-size:11.5px;line-height:11.5px;color:#2a2626;">Best Nr</div>
<div class="t" style="left:1260.2px;top:246.3px;font-size:11.5px;line-height:11.5px;color:#2a2626;transform:scaleX(0.8981);">BE5012261</div>
<div class="t" style="left:1171.7px;top:264.6px;font-size:11.5px;line-height:11.5px;color:#2a2626;transform:scaleX(1.0063);">Dokumentenn...</div>
<div class="t" style="left:1260.2px;top:264.6px;font-size:11.5px;line-height:11.5px;color:#2a2626;transform:scaleX(0.9397);">A 4 7 6 1 3 1 3</div>
<div class="t" style="left:1171.7px;top:282.2px;font-size:11.5px;line-height:11.5px;color:#2a2626;transform:scaleX(0.9837);">Dokument Da...</div>
<div class="t" style="left:1260.2px;top:282.2px;font-size:11.5px;line-height:11.5px;color:#2a2626;transform:scaleX(0.9381);">04.02.2019</div>
<div class="t" style="left:1158.2px;top:413.7px;font-size:11.5px;line-height:11.5px;color:#2a2626;font-weight:700;transform:scaleX(0.9343);">Contact</div>
<div class="t" style="left:1173.0px;top:434.9px;font-size:11.5px;line-height:11.5px;color:#2a2626;transform:scaleX(0.9099);">Supplier</div>
<div class="t" style="left:1173.0px;top:451.7px;font-size:11.5px;line-height:11.5px;color:#2a2626;transform:scaleX(0.9888);">Customer</div>
<div class="t" style="left:1260.2px;top:434.9px;font-size:11.5px;line-height:11.5px;color:#2a2626;">iNNOstyle-Möbel...</div>
<div class="t" style="left:1260.2px;top:451.7px;font-size:11.5px;line-height:11.5px;color:#2a2626;transform:scaleX(0.9573);">Hans Jörg Klebe</div>
<div class="t" style="left:205.5px;top:503.7px;font-size:11.5px;line-height:11.5px;color:#2a2626;transform:scaleX(0.9384);">Image</div>
<div class="t" style="left:267.2px;top:504.3px;font-size:11.5px;line-height:11.5px;color:#2a2626;transform:scaleX(0.9387);">Text</div>
<div class="t" style="left:298.2px;top:530.8px;font-size:8.5px;line-height:8.5px;color:#000;font-weight:700;transform:scaleX(1.1241);-webkit-text-stroke:0;">iNNOstyle Möbelvertriebs GmbH &amp; Co. KG</div>
<div class="t" style="left:298.2px;top:539.7px;font-size:8.5px;line-height:8.5px;color:#000;transform:scaleX(1.0911);-webkit-text-stroke:0;">Siemensstraße 2 · 32676 Lügde</div>
<div class="t" style="left:298.5px;top:570.6px;font-size:16px;line-height:16px;color:#000;transform:scaleX(1.0450);-webkit-text-stroke:0;">Lomadox GmbH &amp; Co. KG</div>
<div class="t" style="left:298.5px;top:585.9px;font-size:16px;line-height:16px;color:#000;transform:scaleX(1.0464);-webkit-text-stroke:0;">Gross Aschen 51</div>
<div class="t" style="left:298.5px;top:601.2px;font-size:16px;line-height:16px;color:#000;transform:scaleX(1.0669);-webkit-text-stroke:0;">49328 Melle</div>
<div class="t" style="left:298.5px;top:616.5px;font-size:16px;line-height:16px;color:#000;transform:scaleX(0.9665);-webkit-text-stroke:0;">DEUTSCHLAND</div>
<div class="t" style="left:696.2px;top:523.7px;font-size:16.5px;line-height:16.5px;color:#000;font-weight:700;transform:scaleX(1.1164);-webkit-text-stroke:0;">AUFTRAGSBESTÄTIGUNG</div>
<div class="t" style="left:699.2px;top:576.1px;font-size:11px;line-height:11px;color:#000;font-weight:700;transform:scaleX(1.1434);-webkit-text-stroke:0;">Bei Rückfragen bitte unbedingt angeben</div>
<div class="t" style="left:699.2px;top:589.9px;font-size:11px;line-height:11px;color:#000;transform:scaleX(1.0884);-webkit-text-stroke:0;">Kundennummer</div>
<div class="t" style="left:861.2px;top:589.9px;font-size:11px;line-height:11px;color:#000;transform:scaleX(1.1495);-webkit-text-stroke:0;">30211 / 1</div>
<div class="t" style="left:985.8px;top:589.9px;font-size:11px;line-height:11px;color:#000;transform:scaleX(1.1343);-webkit-text-stroke:0;">Seite 1 / 1</div>
<div class="t" style="left:699.2px;top:601.6px;font-size:11px;line-height:11px;color:#000;transform:scaleX(1.1020);-webkit-text-stroke:0;">Auftragsart</div>
<div class="t" style="left:699.2px;top:614.8px;font-size:11px;line-height:11px;color:#000;transform:scaleX(1.1019);-webkit-text-stroke:0;">Auftragsnummer</div>
<div class="t" style="left:861.2px;top:614.8px;font-size:11px;line-height:11px;color:#000;transform:scaleX(1.0723);-webkit-text-stroke:0;">A4761313</div>
<div class="t" style="left:699.2px;top:626.6px;font-size:11px;line-height:11px;color:#000;transform:scaleX(1.0972);-webkit-text-stroke:0;">Auftragsdatum</div>
<div class="t" style="left:861.2px;top:626.6px;font-size:11px;line-height:11px;color:#000;transform:scaleX(1.1300);-webkit-text-stroke:0;">11.01.2019</div>
<div class="t" style="left:699.2px;top:649.5px;font-size:11px;line-height:11px;color:#000;font-weight:700;transform:scaleX(1.1133);-webkit-text-stroke:0;">Bei Fragen</div>
<div class="t" style="left:699.2px;top:662.9px;font-size:11px;line-height:11px;color:#000;transform:scaleX(1.0567);-webkit-text-stroke:0;">Kommission</div>
<div class="t" style="left:861.2px;top:662.9px;font-size:11px;line-height:11px;color:#000;font-weight:700;transform:scaleX(1.1582);-webkit-text-stroke:0;">BE5012261</div>
<div class="t" style="left:699.2px;top:675.6px;font-size:11px;line-height:11px;color:#000;transform:scaleX(1.1287);-webkit-text-stroke:0;clip-path:inset(0 0 1.5px 0);">Ihr Auftragsdatum</div>
<div class="t" style="left:861.2px;top:675.6px;font-size:11px;line-height:11px;color:#000;transform:scaleX(1.1133);-webkit-text-stroke:0;clip-path:inset(0 0 1.5px 0);">10.01.2019</div>
<div class="t" style="left:4.4px;top:712.7px;font-size:11.5px;line-height:11.5px;color:#1f1c1c;transform:scaleX(0.9657);">eazybusiness</div>
<div class="t" style="left:79.8px;top:712.7px;font-size:11.5px;line-height:11.5px;color:#1f1c1c;transform:scaleX(1.0344);">Dustin Rottmann</div>
<div class="t" style="left:176.7px;top:712.7px;font-size:11.5px;line-height:11.5px;color:#1f1c1c;transform:scaleX(0.9139);">1.5.17.0</div>
<div class="t" style="left:222.4px;top:712.7px;font-size:11.5px;line-height:11.5px;color:#1f1c1c;transform:scaleX(1.0119);">(Worker service running on JTL)</div>
<div class="t" style="left:1218.2px;top:742.7px;font-size:11.5px;line-height:11.5px;color:#fff;transform:scaleX(0.9028);-webkit-text-stroke:0.1px currentColor;">ENG</div>
<div class="t" style="left:1256.5px;top:733.5px;font-size:11.5px;line-height:11.5px;color:#fff;transform:scaleX(0.9587);-webkit-text-stroke:0.1px currentColor;">10:42 PM</div>
<div class="t" style="left:1254.5px;top:751.9px;font-size:11.5px;line-height:11.5px;color:#fff;transform:scaleX(1.0266);-webkit-text-stroke:0.1px currentColor;">13-Apr-20</div>
</body></html>
